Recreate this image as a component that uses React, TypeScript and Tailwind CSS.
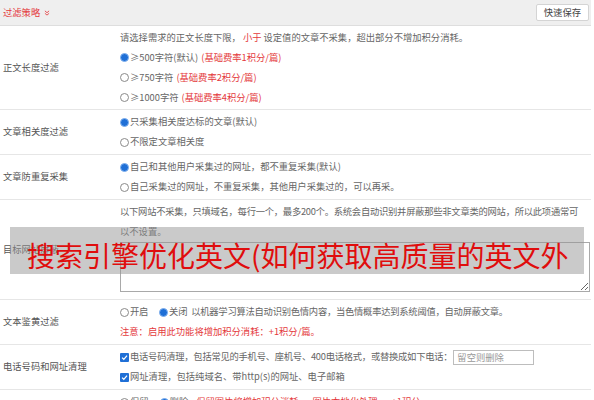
import React from 'react';

const Radio: React.FC<{ checked?: boolean }> = ({ checked }) =>
  checked ? (
    <span className="inline-flex w-[9px] h-[9px] rounded-full border border-[#7fb0ee] bg-[#1f6fd6] mr-[1px] shrink-0" />
  ) : (
    <span className="inline-block w-[9px] h-[9px] rounded-full border border-[#8a8a8a] bg-white mr-[1px] shrink-0" />
  );

const Check: React.FC = () => (
  <span className="inline-flex items-center justify-center w-[9px] h-[9px] rounded-[1px] bg-[#1f6fd6] mr-[1px] shrink-0">
    <svg width="7" height="7" viewBox="0 0 10 10">
      <path d="M1.5 5.2 L4 7.6 L8.6 2.4" stroke="#fff" strokeWidth="1.8" fill="none" />
    </svg>
  </span>
);

const Row: React.FC<{ label: string; h: string; children: React.ReactNode }> = ({ label, h, children }) => (
  <div className={`flex border-b border-[#e6e6e6] ${h}`}>
    <div className="w-[120px] pl-[3px] flex items-center text-[#555] shrink-0">{label}</div>
    <div className="flex-1 flex flex-col justify-center">{children}</div>
  </div>
);

const Line: React.FC<{ children: React.ReactNode; tight?: boolean }> = ({ children, tight }) => (
  <div className={`h-[20px] flex items-center whitespace-nowrap ${tight ? 'tracking-[-0.25px]' : ''}`}>{children}</div>
);

const App: React.FC = () => {
  return (
    <div
      className="relative w-[591px] bg-white text-[9.3px] text-[#666]"
      style={{ fontFamily: '"Noto Sans CJK SC", "Noto Sans", sans-serif' }}
    >
      <div className="h-[26px] bg-[#efefef] border-b border-[#dedede] flex items-center justify-between pl-[3px] pr-[2px]">
        <div className="flex items-center text-[#e4393c]">
          <span>过滤策略</span>
          <svg width="6" height="6" viewBox="0 0 10 10" className="ml-[4px]">
            <path d="M1.5 1.5 L5 4.5 L8.5 1.5 M1.5 5.5 L5 8.5 L8.5 5.5" stroke="#e4393c" strokeWidth="1.4" fill="none" />
          </svg>
        </div>
        <button className="h-[17px] px-[7px] bg-white border border-[#d4d4d4] rounded-[2px] text-[#444] text-[9.3px] leading-none">
          快速保存
        </button>
      </div>

      <Row label="正文长度过滤" h="h-[84px]">
        <Line>
          请选择需求的正文长度下限，<span className="text-[#e4393c] mx-[2px]">小于</span>设定值的文章不采集，超出部分不增加积分消耗。
        </Line>
        <Line>
          <Radio checked />≥500字符(默认) <span className="text-[#e4393c] ml-[3px]">(基础费率1积分/篇)</span>
        </Line>
        <Line>
          <Radio />≥750字符 <span className="text-[#e4393c] ml-[3px]">(基础费率2积分/篇)</span>
        </Line>
        <Line>
          <Radio />≥1000字符 <span className="text-[#e4393c] ml-[3px]">(基础费率4积分/篇)</span>
        </Line>
      </Row>

      <Row label="文章相关度过滤" h="h-[45px]">
        <Line>
          <Radio checked />只采集相关度达标的文章(默认)
        </Line>
        <Line>
          <Radio />不限定文章相关度
        </Line>
      </Row>

      <Row label="文章防重复采集" h="h-[45px]">
        <Line>
          <Radio checked />自己和其他用户采集过的网址，都不重复采集(默认)
        </Line>
        <Line>
          <Radio />自己采集过的网址，不重复采集，其他用户采集过的，可以再采。
        </Line>
      </Row>

      <div className="flex border-b border-[#e6e6e6] h-[100px]">
        <div className="w-[120px] pl-[3px] flex items-center text-[#555] shrink-0">目标网站屏蔽</div>
        <div className="flex-1 pt-[2px]">
          <Line tight>以下网站不采集，只填域名，每行一个，最多200个。系统会自动识别并屏蔽那些非文章类的网站，所以此项通常可</Line>
          <Line>以不设置。</Line>
          <textarea
            readOnly
            className="block w-[470px] h-[50px] border border-[#a9a9a9] bg-white resize-y"
          />
        </div>
      </div>

      <Row label="文本鉴黄过滤" h="h-[45px]">
        <Line tight>
          <Radio />开启<span className="w-[11px]" />
          <Radio checked />关闭<span className="w-[4px]" />以机器学习算法自动识别色情内容，当色情概率达到系统阈值，自动屏蔽文章。
        </Line>
        <Line>
          <span className="text-[#e4393c]">注意：启用此功能将增加积分消耗：+1积分/篇。</span>
        </Line>
      </Row>

      <Row label="电话号码和网址清理" h="h-[45px]">
        <Line tight>
          <Check />电话号码清理，包括常见的手机号、座机号、400电话格式，或替换成如下电话：
          <input
            readOnly
            placeholder="留空则删除"
            className="ml-[1px] w-[81px] h-[15px] border border-[#bdbdbd] px-[3px] text-[9.3px] tracking-normal placeholder:text-[#999] outline-none"
          />
        </Line>
        <Line>
          <Check />网址清理，包括纯域名、带http(s)的网址、电子邮箱
        </Line>
      </Row>

      <Row label="文章图片处理设置" h="h-[45px]">
        <Line>
          <Radio />保留<span className="w-[11px]" />
          <Radio checked />删除<span className="w-[8px]" />
          <span className="text-[#e4393c]">保留图片将增加积分消耗</span>
          <span className="text-[#e4393c] ml-[14px]">图片本地化处理</span>
          <span className="text-[#e4393c] ml-[14px]">+1积分</span>
        </Line>
        <Line>
          <Radio />仅保留正文中的第一张图片
        </Line>
      </Row>

      <div className="absolute left-[10px] top-[227px] w-[574px] h-[47px] bg-[rgba(150,150,150,0.5)] flex items-center pl-[17px] pt-[8px]">
        <span className="text-[28px] leading-none text-[#e00d0d] whitespace-nowrap">搜索引擎优化英文(如何获取高质量的英文外</span>
      </div>
    </div>
  );
};

export default App;
